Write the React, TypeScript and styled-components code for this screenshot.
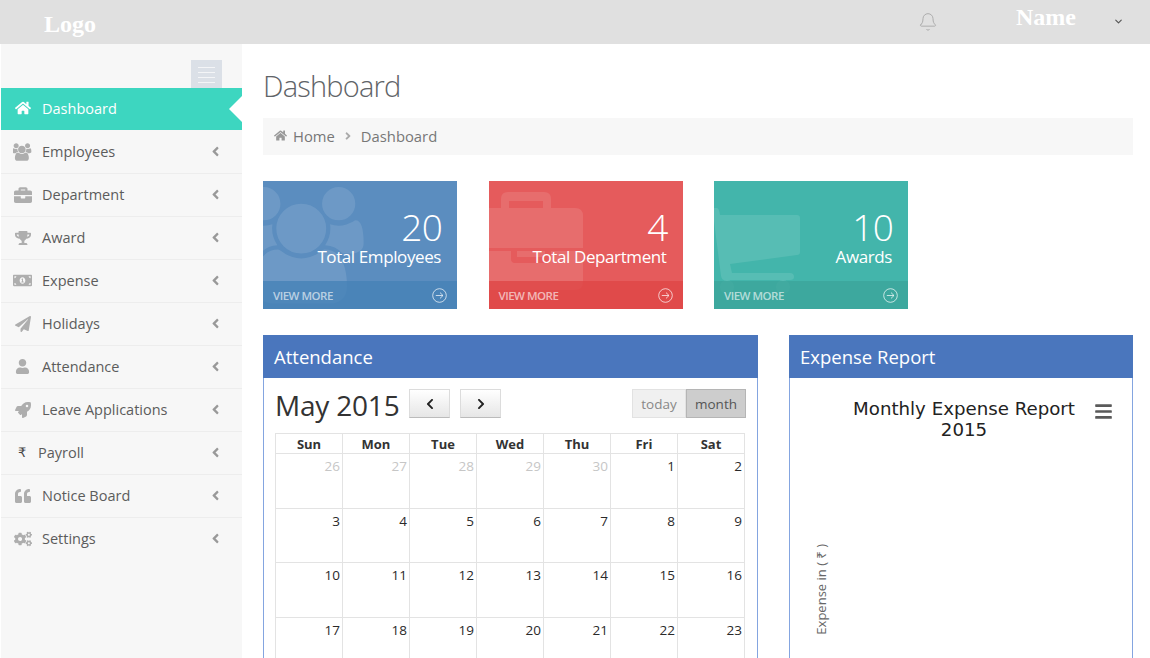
import React from 'react';
import styled, { createGlobalStyle } from 'styled-components';
import {
  FaHome, FaBriefcase, FaTrophy, FaMoneyBillAlt, FaPaperPlane, FaUser,
  FaRocket, FaQuoteLeft, FaCogs, FaAngleLeft, FaAngleRight, FaChevronLeft,
  FaChevronRight, FaBars,
} from 'react-icons/fa';
import { Bell as BellIcon, ChevronDown } from 'lucide-react';

const USERS_PATH = 'M529 896q-162 5-265 128h-134q-82 0-138-40.500t-56-118.500q0-353 124-353 6 0 43.500 21t97.500 42.500 119 21.500q67 0 133-23-5 37-5 66 0 139 81 256zm1071 637q0 120-73 189.500t-194 69.500h-874q-121 0-194-69.500t-73-189.500q0-53 3.500-103.500t14-109 26.500-108.500 43-97.500 62-81 85.500-53.500 111.500-20q10 0 43 21.500t73 48 107 48 135 21.500 135-21.500 107-48 73-48 43-21.500q61 0 111.500 20t85.500 53.500 62 81 43 97.500 26.500 108.500 14 109 3.500 103.500zm-1024-1277q0 106-75 181t-181 75-181-75-75-181 75-181 181-75 181 75 75 181zm704 384q0 159-112.500 271.500t-271.500 112.500-271.500-112.500-112.500-271.500 112.500-271.500 271.500-112.500 271.500 112.500 112.500 271.500zm576 225q0 78-56 118.500t-138 40.500h-134q-103-123-265-128 81-117 81-256 0-29-5-66 66 23 133 23 59 0 119-21.500t97.500-42.500 43.500-21q124 0 124 353zm-128-609q0 106-75 181t-181 75-181-75-75-181 75-181 181-75 181 75 75 181z';

const GlobalStyle = createGlobalStyle`
  html, body { margin: 0; padding: 0; background: #fff; }
  body { font-family: "Open Sans", "Noto Sans", sans-serif; color: #555; }
  * { box-sizing: border-box; }
`;

const Page = styled.div`
  width: 1150px;
  height: 658px;
  overflow: hidden;
  display: flex;
  flex-direction: column;
`;

const Header = styled.header`
  height: 44px;
  flex: none;
  background: #e0e0e0;
  display: flex;
  align-items: flex-start;
  font-family: "Liberation Serif", serif;
  font-weight: bold;
  color: #fff;
`;

const Logo = styled.div`
  margin: 10px 0 0 44px;
  font-size: 24px;
  line-height: 28px;
`;

const Bell = styled.div`
  margin: 12px 0 0 auto;
  display: flex;
  color: #adadad;
`;

const UserName = styled.div`
  margin: 3px 0 0 78px;
  font-size: 24px;
  line-height: 28px;
`;

const UserCaret = styled.div`
  margin: 16px 26px 0 37px;
  display: flex;
  color: #555;
`;

const Body = styled.div`
  flex: 1;
  display: flex;
  min-height: 0;
`;

const Sidebar = styled.aside`
  width: 241px;
  margin-left: 1px;
  flex: none;
  background: #f7f7f7;
`;

const ToggleRow = styled.div`
  height: 44px;
  display: flex;
  justify-content: flex-end;
  padding: 16px 20px 0 0;
`;

const Toggle = styled.div`
  width: 31px;
  height: 28px;
  background: #dbe0e7;
  display: flex;
  flex-direction: column;
  align-items: center;
  padding-top: 7px;
  gap: 4px;

  span {
    width: 17px;
    height: 1px;
    background: #f4f5f7;
  }
`;

const MenuRow = styled.div<{ $active?: boolean }>`
  position: relative;
  height: ${p => (p.$active ? '42px' : '43px')};
  display: flex;
  align-items: center;
  padding-left: 12px;
  padding-bottom: ${p => (p.$active ? '2px' : '0')};
  font-size: 14.5px;
  color: ${p => (p.$active ? '#fff' : '#5c5c5c')};
  background: ${p => (p.$active ? '#3dd6c0' : 'transparent')};
  box-shadow: ${p => (p.$active ? 'none' : '0 1px 0 #ededed')};

  &:last-child { box-shadow: none; }

  ${p => p.$active && `
    &::after {
      content: '';
      position: absolute;
      right: 0;
      top: 8px;
      border-style: solid;
      border-width: 13px 13px 13px 0;
      border-color: transparent #fff transparent transparent;
    }
  `}
`;

const MenuIcon = styled.span<{ $active?: boolean; $size?: number }>`
  width: 19px;
  display: flex;
  justify-content: center;
  margin-right: 10px;
  color: ${p => (p.$active ? '#fff' : '#aeaeae')};
  font-size: ${p => p.$size ?? 17}px;
`;

const UsersGlyph = styled.svg`
  width: 19px;
  height: 18px;
  fill: currentColor;
`;

const RupeeIcon = styled.span`
  width: 12px;
  margin: 0 8px 0 5px;
  color: #444;
  font-size: 13px;
  font-family: "DejaVu Sans", sans-serif;
`;

const MenuChevron = styled.span`
  margin-left: auto;
  margin-right: 19px;
  display: flex;
  color: #999;
  font-size: 15px;
`;

const Main = styled.main`
  flex: 1;
  min-width: 0;
  padding: 0 17px 0 21px;
`;

const PageTitle = styled.h1`
  margin: 0;
  padding-top: 22px;
  height: 74px;
  font-size: 29px;
  line-height: 40px;
  font-weight: 300;
  letter-spacing: -0.8px;
  color: #5f6468;
`;

const Breadcrumb = styled.div`
  height: 37px;
  background: #f7f7f7;
  display: flex;
  align-items: center;
  padding: 0 0 2px 11px;
  font-size: 14.8px;
  color: #777;

  svg { color: #999; font-size: 13px; margin-right: 6px; }
  svg.sep { font-size: 12px; margin: 0 7px 0 7px; color: #aaa; }
`;

const CardRow = styled.div`
  display: flex;
  gap: 31.5px;
  margin-top: 26px;
`;

const Card = styled.div<{ $bg: string }>`
  position: relative;
  width: 194px;
  height: 128px;
  overflow: hidden;
  background: ${p => p.$bg};
  color: #fff;
  display: flex;
  flex-direction: column;
  align-items: flex-end;
`;

const Watermark = styled.svg`
  position: absolute;
  left: 0;
  top: 0;
  width: 194px;
  height: 128px;
  fill: #fff;
  fill-opacity: 0.11;
`;

const CardNumber = styled.div`
  position: relative;
  margin: 26px 15px 0 0;
  font-size: 37px;
  line-height: 40px;
  font-weight: 300;
  letter-spacing: -0.8px;
`;

const CardLabel = styled.div`
  position: relative;
  margin: 0 16px 0 0;
  font-size: 17px;
  line-height: 20px;
  letter-spacing: -0.4px;
`;

const CardFooter = styled.footer<{ $bg: string }>`
  position: relative;
  margin-top: auto;
  width: 100%;
  height: 28px;
  display: flex;
  align-items: center;
  justify-content: space-between;
  padding: 0 10px 0 10px;
  background: ${p => p.$bg};
  font-size: 11.5px;
  font-weight: 600;
  letter-spacing: -0.5px;
  color: rgba(255, 255, 255, 0.62);
`;

const ArrowCircle = styled.svg`
  width: 15px;
  height: 15px;
  fill: none;
  stroke: rgba(255, 255, 255, 0.7);
  stroke-width: 1;
`;

const PanelRow = styled.div`
  display: flex;
  gap: 31px;
  margin-top: 26px;
`;

const Panel = styled.section<{ $width: number }>`
  width: ${p => p.$width}px;
  height: 340px;
  border: 1px solid #84a5e0;
  flex: none;
`;

const PanelHead = styled.div`
  height: 43px;
  margin: -1px -1px 0;
  background: #4a76bd;
  color: #fff;
  font-size: 18.5px;
  line-height: 43px;
  padding-left: 11px;
`;

const CalendarBody = styled.div`
  padding: 11px 11px 0 11px;
`;

const CalendarBar = styled.div`
  height: 44px;
  display: flex;
  align-items: flex-start;
`;

const MonthTitle = styled.div`
  font-size: 28px;
  line-height: 32px;
  color: #333;
  margin-right: 10px;
  letter-spacing: -0.2px;
`;

const NavButton = styled.button`
  width: 41px;
  height: 29px;
  margin-right: 10px;
  padding: 0;
  display: flex;
  align-items: center;
  justify-content: center;
  border: 1px solid #dcdcdc;
  border-bottom-color: #bbb;
  background: linear-gradient(#fff, #e6e6e6);
  color: #222;
  font-size: 12px;
`;

const ViewGroup = styled.div`
  margin-left: auto;
  display: flex;
`;

const ViewButton = styled.button<{ $on?: boolean }>`
  height: 29px;
  width: ${p => (p.$on ? '60px' : '54px')};
  padding: 0;
  font-family: inherit;
  font-size: 13.5px;
  color: ${p => (p.$on ? '#555' : '#888')};
  border: 1px solid ${p => (p.$on ? '#b5b5b5' : '#e2e2e2')};
  background: ${p => (p.$on ? '#cdcdcd' : '#f0f0f0')};
`;

const CalendarGrid = styled.div`
  display: grid;
  grid-template-columns: repeat(7, 67px);
  grid-template-rows: 20px repeat(4, 54.7px);
  width: 470px;
  border-top: 1px solid #e3e3e3;
  border-left: 1px solid #e3e3e3;
`;

const HeadCell = styled.div`
  font-size: 13px;
  line-height: 20px;
  font-weight: 700;
  text-align: center;
  color: #333;
  border-right: 1px solid #e3e3e3;
  border-bottom: 1px solid #e3e3e3;
`;

const DayCell = styled.div<{ $muted?: boolean }>`
  border-right: 1px solid #e3e3e3;
  border-bottom: 1px solid #e3e3e3;
  text-align: right;
  padding: 2px 2px 0 0;
  font-size: 13.5px;
  line-height: 20px;
  color: ${p => (p.$muted ? '#c6c6c6' : '#2a2a2a')};
`;

const ChartBody = styled.div`
  position: relative;
  height: 296px;
  display: flex;
  align-items: flex-end;
  padding: 0 0 39px 23px;
`;

const ChartTitle = styled.div`
  position: absolute;
  left: 58px;
  top: 20px;
  width: 232px;
  text-align: center;
  font-family: "DejaVu Sans", sans-serif;
  font-size: 18.2px;
  line-height: 21px;
  color: #222;
`;

const ChartMenu = styled.div`
  position: absolute;
  right: 19px;
  top: 24px;
  display: flex;
  color: #5a5a5a;
  font-size: 19px;
`;

const AxisLabel = styled.div`
  writing-mode: vertical-rl;
  transform: rotate(180deg);
  font-size: 13px;
  line-height: 16px;
  color: #666;
`;

const UsersIcon = () => (
  <UsersGlyph viewBox="0 0 1920 1792"><path d={USERS_PATH} /></UsersGlyph>
);

const MoreLink = () => (
  <ArrowCircle viewBox="0 0 15 15">
    <circle cx="7.5" cy="7.5" r="6.8" />
    <path d="M3.8 7.5h7M8 4.6l3 2.9-3 2.9" />
  </ArrowCircle>
);

const menu = [
  { label: 'Employees', icon: <UsersIcon /> },
  { label: 'Department', icon: <FaBriefcase />, size: 18 },
  { label: 'Award', icon: <FaTrophy />, size: 16 },
  { label: 'Expense', icon: <FaMoneyBillAlt />, size: 19 },
  { label: 'Holidays', icon: <FaPaperPlane />, size: 16 },
  { label: 'Attendance', icon: <FaUser />, size: 15 },
  { label: 'Leave Applications', icon: <FaRocket />, size: 16 },
  { label: 'Payroll', icon: null },
  { label: 'Notice Board', icon: <FaQuoteLeft />, size: 16 },
  { label: 'Settings', icon: <FaCogs />, size: 18 },
];

const weekDays = ['Sun', 'Mon', 'Tue', 'Wed', 'Thu', 'Fri', 'Sat'];

const days = [
  26, 27, 28, 29, 30, 1, 2,
  3, 4, 5, 6, 7, 8, 9,
  10, 11, 12, 13, 14, 15, 16,
  17, 18, 19, 20, 21, 22, 23,
];

const App = () => (
  <Page>
    <GlobalStyle />
    <Header>
      <Logo>Logo</Logo>
      <Bell><BellIcon size={20} strokeWidth={1.2} /></Bell>
      <UserName>Name</UserName>
      <UserCaret><ChevronDown size={11} strokeWidth={2.5} /></UserCaret>
    </Header>
    <Body>
      <Sidebar>
        <ToggleRow>
          <Toggle><span /><span /><span /><span /></Toggle>
        </ToggleRow>
        <MenuRow $active>
          <MenuIcon $active $size={16}><FaHome /></MenuIcon>
          Dashboard
        </MenuRow>
        {menu.map(item => (
          <MenuRow key={item.label}>
            {item.icon ? <MenuIcon $size={item.size}>{item.icon}</MenuIcon> : <RupeeIcon>₹</RupeeIcon>}
            {item.label}
            <MenuChevron><FaAngleLeft /></MenuChevron>
          </MenuRow>
        ))}
      </Sidebar>
      <Main>
        <PageTitle>Dashboard</PageTitle>
        <Breadcrumb>
          <FaHome />
          Home
          <FaAngleRight className="sep" />
          Dashboard
        </Breadcrumb>
        <CardRow>
          <Card $bg="#5b8dbf">
            <Watermark viewBox="0 0 194 128">
              <path d={USERS_PATH} transform="translate(-20 6) scale(0.065)" />
            </Watermark>
            <CardNumber>20</CardNumber>
            <CardLabel>Total Employees</CardLabel>
            <CardFooter $bg="rgba(70, 130, 182, 0.8)">
              VIEW MORE
              <MoreLink />
            </CardFooter>
          </Card>
          <Card $bg="#e55b5c">
            <Watermark viewBox="0 0 194 128">
              <path fillRule="evenodd" d="M12 27V18q0-7 7-7h36q7 0 7 7v9zm8-7v7h34v-7z" />
              <path d="M0 27h86q8 0 8 8v32H0z" />
              <path d="M0 70h22v8q0 4 4 4h32q4 0 4-4v-8h32v31q0 8-8 8H0z" />
              <path d="M28 70h28v6H28z" />
            </Watermark>
            <CardNumber>4</CardNumber>
            <CardLabel>Total Department</CardLabel>
            <CardFooter $bg="rgba(222, 70, 70, 0.8)">
              VIEW MORE
              <MoreLink />
            </CardFooter>
          </Card>
          <Card $bg="#43b5ab">
            <Watermark viewBox="0 0 194 128">
              <path d="M0 27h3q2 0 3 7h77q3 0 3 3v34q0 3-3 3l-67 9 2 9h58q4 0 4 4 0 3-4 3H10q-2 0-3-4L0 40z" />
              <circle cx="13" cy="106" r="7" />
              <circle cx="69" cy="106" r="7" />
            </Watermark>
            <CardNumber>10</CardNumber>
            <CardLabel>Awards</CardLabel>
            <CardFooter $bg="rgba(60, 165, 155, 0.8)">
              VIEW MORE
              <MoreLink />
            </CardFooter>
          </Card>
        </CardRow>
        <PanelRow>
          <Panel $width={495}>
            <PanelHead>Attendance</PanelHead>
            <CalendarBody>
              <CalendarBar>
                <MonthTitle>May 2015</MonthTitle>
                <NavButton><FaChevronLeft /></NavButton>
                <NavButton><FaChevronRight /></NavButton>
                <ViewGroup>
                  <ViewButton>today</ViewButton>
                  <ViewButton $on>month</ViewButton>
                </ViewGroup>
              </CalendarBar>
              <CalendarGrid>
                {weekDays.map(d => <HeadCell key={d}>{d}</HeadCell>)}
                {days.map((d, i) => (
                  <DayCell key={i} $muted={i < 5}>{d}</DayCell>
                ))}
              </CalendarGrid>
            </CalendarBody>
          </Panel>
          <Panel $width={344}>
            <PanelHead>Expense Report</PanelHead>
            <ChartBody>
              <ChartTitle>Monthly Expense Report 2015</ChartTitle>
              <ChartMenu><FaBars /></ChartMenu>
              <AxisLabel>Expense in ( ₹ )</AxisLabel>
            </ChartBody>
          </Panel>
        </PanelRow>
      </Main>
    </Body>
  </Page>
);

export default App;
